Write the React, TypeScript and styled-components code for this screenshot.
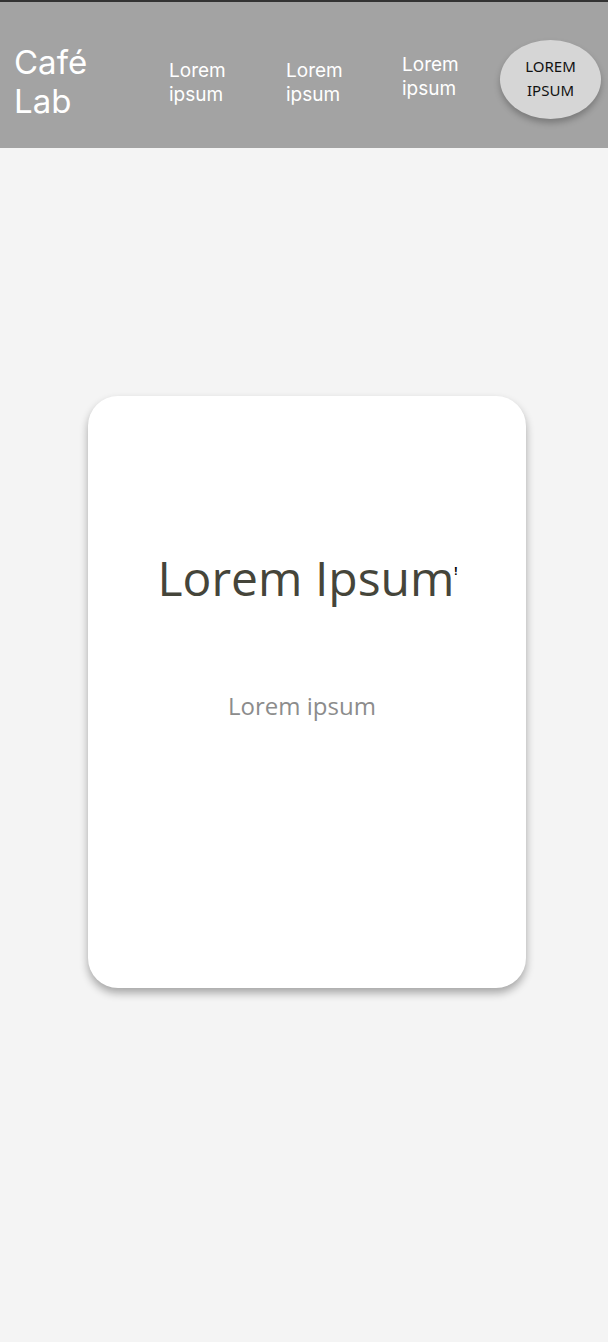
import styled, { createGlobalStyle } from "styled-components";

const GlobalStyle = createGlobalStyle`
    html, body {
        margin: 0;
        padding: 0;
        background: #f4f4f4;
    }
    body {
        font-family: Inter, "Noto Sans", sans-serif;
    }
`;

const navItems = ["Lorem ipsum", "Lorem ipsum", "Lorem ipsum"];

export default function App() {
    return (
        <Page>
            <GlobalStyle />
            <Header>
                <Logo>
                    Café
                    <br />
                    Lab
                </Logo>
                <Nav>
                    {navItems.map((item, i) => (
                        <NavItem key={i} $raise={i === 2}>
                            {item.split(" ")[0]}
                            <br />
                            {item.split(" ")[1]}
                        </NavItem>
                    ))}
                </Nav>
                <CtaButton>
                    LOREM
                    <br />
                    IPSUM
                </CtaButton>
            </Header>
            <Main>
                <Card>
                    <Title>
                        Lorem Ipsum<Bang>!</Bang>
                    </Title>
                    <Subtitle>Lorem ipsum</Subtitle>
                </Card>
            </Main>
        </Page>
    );
}

const Page = styled.div`
    width: 608px;
    min-height: 1342px;
    background: #f4f4f4;
`;

const Header = styled.header`
    height: 146px;
    background: #a3a3a3;
    border-top: 2px solid #333;
    display: flex;
    align-items: center;
`;

const Logo = styled.div`
    width: 155px;
    flex-shrink: 0;
    padding-left: 14px;
    color: #fff;
    font-family: Inter, sans-serif;
    font-size: 33px;
    line-height: 39px;
    font-weight: 400;
    margin-top: 14px;
`;

const Nav = styled.nav`
    display: grid;
    grid-template-columns: 117px 116px 98px;
    flex-shrink: 0;
`;

const NavItem = styled.div<{ $raise?: boolean }>`
    color: #fff;
    font-family: Inter, sans-serif;
    font-size: 19px;
    line-height: 24px;
    margin-top: ${(p) => (p.$raise ? "10px" : "16px")};
`;

const CtaButton = styled.button`
    width: 101px;
    height: 79px;
    flex-shrink: 0;
    border: none;
    border-radius: 50%;
    background: #d6d6d6;
    color: #111;
    font-family: "Noto Sans", sans-serif;
    font-size: 15px;
    line-height: 24px;
    padding: 0 0 2px;
    margin-top: 8px;
    box-shadow: 0 4px 6px rgba(0, 0, 0, 0.25);
`;

const Main = styled.main`
    padding: 248px 0 0 88px;
`;

const Card = styled.div`
    width: 438px;
    height: 592px;
    background: #fff;
    border-radius: 30px;
    box-shadow: 0 5px 8px rgba(0, 0, 0, 0.32);
    display: flex;
    flex-direction: column;
    align-items: center;
    padding-top: 150px;
    box-sizing: border-box;
`;

const Title = styled.h1`
    margin: 0 0 0 -2px;
    font-family: "Open Sans", sans-serif;
    font-size: 48px;
    font-weight: 400;
    line-height: 64px;
    color: #45453a;
    position: relative;
`;

const Bang = styled.span`
    position: absolute;
    top: 20px;
    right: -3px;
    font-size: 11px;
    line-height: 10px;
    font-weight: 700;
    color: #000;
`;

const Subtitle = styled.p`
    margin: 80px 0 0 -10px;
    font-family: "Open Sans", sans-serif;
    font-size: 24px;
    line-height: 32px;
    color: #8c8c8c;
`;
